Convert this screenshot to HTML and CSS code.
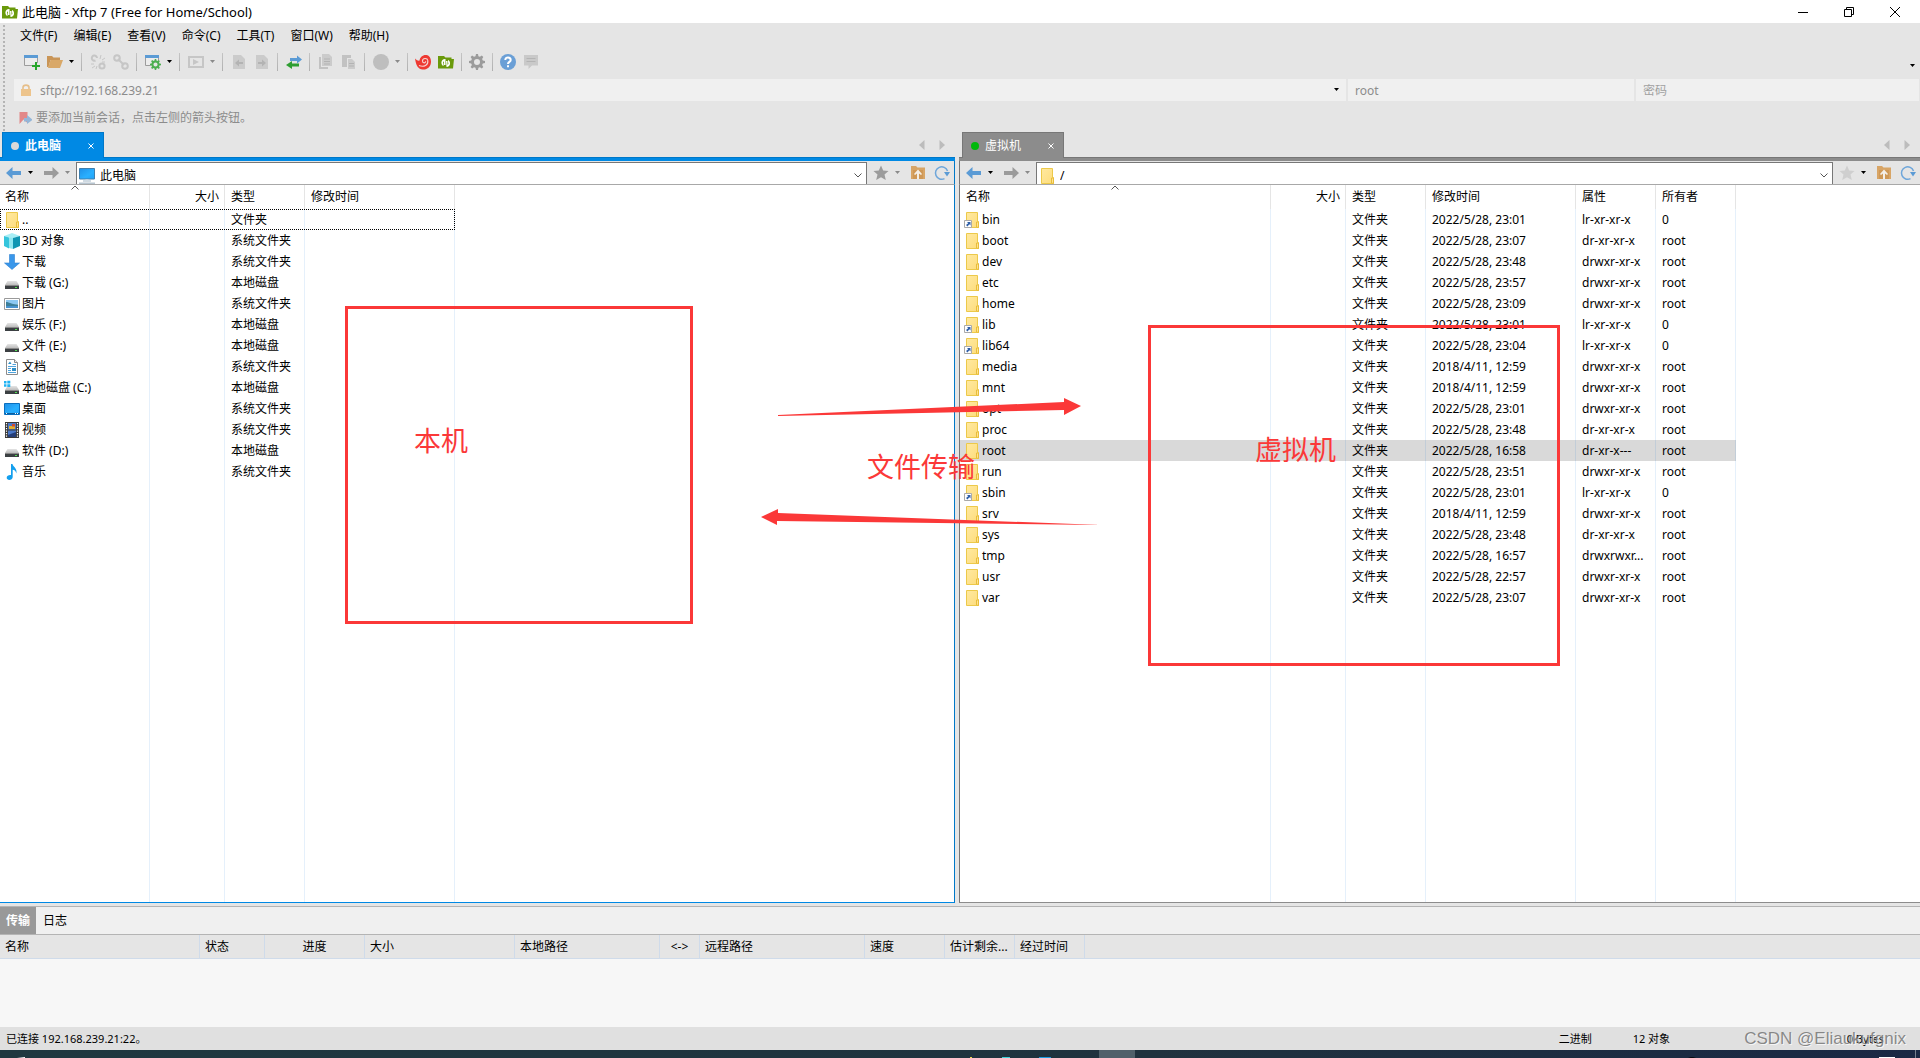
FILE: index.html
```html
<!DOCTYPE html>
<html lang="zh-CN">
<head>
<meta charset="utf-8">
<title>此电脑 - Xftp 7 (Free for Home/School)</title>
<link rel="stylesheet" href="styles.css">
</head>
<body>
<svg class="defs" aria-hidden="true">
  <defs>
    <linearGradient id="gFolder" x1="0" y1="0" x2="1" y2="1"><stop offset="0" stop-color="#ffe9a0"/><stop offset="1" stop-color="#fddc7c"/></linearGradient>
    <linearGradient id="gScreen" x1="0" y1="0" x2="1" y2="1"><stop offset="0" stop-color="#1e90e8"/><stop offset="0.6" stop-color="#29b0ff"/><stop offset="1" stop-color="#1fa2f8"/></linearGradient>
    <linearGradient id="gDisk" x1="0" y1="0" x2="0" y2="1"><stop offset="0" stop-color="#e4e4e4"/><stop offset="1" stop-color="#bdbdbd"/></linearGradient>
  </defs>
  <symbol id="folder" viewBox="0 0 16 16"><path d="M2.5.5h11v9h1v6h-12z" fill="url(#gFolder)" stroke="#ecc94a"/><path d="M12.5 15V10h2v5.500z" fill="#ffe391" stroke="#e8bd3a"/></symbol>
  <symbol id="folderlink" viewBox="0 0 16 16"><use href="#folder"/><path d="M.5 8.500h7v7h-7z" fill="#fff" stroke="#a9a9a9"/><path d="M3 10h3.500v3.500L5.300 12.300 3.500 14.500 2 13l2.200-1.800z" fill="#2f5fa8"/></symbol>
  <symbol id="cube" viewBox="0 0 16 16"><path d="M0 3 8 0l8 3-8 2.500z" fill="#a8eef5"/><path d="M0 3l5 1.500v11L0 13z" fill="#35c5dc"/><path d="M5 4.500 9 5v11l-4-1z" fill="#8fe6f0"/><path d="M9 5l7-2v10l-7 3z" fill="#0f95b2"/></symbol>
  <symbol id="down" viewBox="0 0 16 16"><path d="M5.500.5h5V9h5L8 15.500.5 9h5z" fill="#3a97ea" stroke="#2b7fd0" stroke-width=".6"/></symbol>
  <symbol id="disk" viewBox="0 0 16 16"><path d="M3.500 6h9L15 10H1z" fill="url(#gDisk)"/><path d="M1 10h14v4H1z" fill="#3c4043"/><path d="M1 10h14v1H1z" fill="#888"/><path d="M11 12h2v1h-2z" fill="#52e052"/></symbol>
  <symbol id="cdisk" viewBox="0 0 16 16"><use href="#disk"/><path d="M0 0h6v7H0z" fill="#fff"/><path d="M0 1h2.500v2.500H0zM3.300.7h3v2.800h-3zM0 4.300h2.500v2.500H0zM3.300 4.300h3V7h-3z" fill="#1fb2f2"/></symbol>
  <symbol id="picture" viewBox="0 0 16 16"><path d="M.5 2.500h15v11H.5z" fill="#fff" stroke="#9a9a9a"/><path d="M2 4h12v4.500H2z" fill="#8cc8f2"/><path d="M2 6c3 0 4 2 12 2.500V12H2z" fill="#3d7f9a"/><path d="M2 10h12v2H2z" fill="#4792cf"/></symbol>
  <symbol id="doc" viewBox="0 0 16 16"><path d="M2.500.5h8l3 3v12h-11z" fill="#fff" stroke="#8b8b8b"/><path d="M10.500.5v3h3" fill="#eee" stroke="#8b8b8b"/><path d="M4 7.500h8M4 9.500h3M4 11.500h3M4 13.500h8M8.500 5.500H12" stroke="#4fa3dd"/><path d="M4 5l2-2.500L7.500 5zM8 9h4v3H8z" fill="#2f8fc6"/></symbol>
  <symbol id="desktop" viewBox="0 0 16 16"><path d="M.5 2.500h15v11H.5z" fill="url(#gScreen)" stroke="#0a6fbe"/><path d="M1 12h14v1H1z" fill="#0c5e9e"/><path d="M2 12h1v1H2zM11 12h1v1h-1zM13 12h1v1h-1z" fill="#fff"/></symbol>
  <symbol id="video" viewBox="0 0 16 16"><path d="M1 0h14v16H1z" fill="#3a3a3a"/><path d="M4 1h8v6.500H4z" fill="#4a78c8"/><path d="M4 8.500h8V15H4z" fill="#4a78c8"/><path d="M5 4h6v3H5z" fill="#e0b030"/><path d="M8 2h3v2.500H8z" fill="#d04a30"/><path d="M4 13l8-3v5H4z" fill="#253e78"/><path d="M2.500 1v14M13.500 1v14" stroke="#fff" stroke-width="1.200" stroke-dasharray="1.300 1.200"/></symbol>
  <symbol id="music" viewBox="0 0 16 16"><path d="M7 0h1.500c.5 3 5 4 3.800 9.500C12 7 10.500 6 8.700 5.700V13c0 3.500-6 4-6 .8C2.700 11.500 5 10.700 7 11z" fill="#139fee"/></symbol>
  <symbol id="pc" viewBox="0 0 16 16"><path d="M.5.5h15v10.500H.5z" fill="url(#gScreen)" stroke="#3f7fae"/><path d="M4 12.500h8v1H4z" fill="#9fb4c4"/><path d="M6.500 11.500h3v1h-3z" fill="#cfdbe4"/><path d="M0 14.500h16v1.500H0z" fill="#b7c5d0"/></symbol>
  <symbol id="logo" viewBox="0 0 16 16"><path d="M0 2h6l1.500 1.500h6V5H16l-1 9.500H0z" fill="#6a9a0b"/><path d="M7 5C2.500 5 2.500 11 5.500 12v-2.200c-.8-1-.3-2.300.5-2.600V11h1.500V5zM8.500 13c4.500 0 4.500-6 1.500-7v2.200c.8 1 .3 2.300-.5 2.600V7H8z" fill="#fff"/></symbol>
  <symbol id="new" viewBox="0 0 16 16"><path d="M.5 1.500h13v10H.5z" fill="#ececec" stroke="#9c9c9c"/><path d="M0 1h14v3H0z" fill="#5b9bd5"/><path d="M8 9h8v6H8z" fill="#e5e5e5"/><path d="M12 8v8M8 12h8" stroke="#27a52b" stroke-width="2"/></symbol>
  <symbol id="open" viewBox="0 0 16 16"><path d="M0 2h5l1.500 1.500H13V6H3.500L1.500 13H0z" fill="#c99557"/><path d="M3.500 6H16l-3 8H1z" fill="#d9a868"/></symbol>
  <symbol id="link" viewBox="0 0 16 16"><g fill="none" stroke="#c6c6c6" stroke-width="2"><circle cx="4" cy="4" r="2.800"/><circle cx="12" cy="12" r="2.800"/><path d="m5 5 6 6"/></g></symbol>
  <symbol id="unlink" viewBox="0 0 16 16"><g fill="none" stroke="#c6c6c6" stroke-width="2"><path d="M5.500 6.500A2.600 2.600 0 1 1 7 4"/><circle cx="12" cy="12" r="2.600"/><path d="m10 5 1-4M12 6l3-2M12 8h3M1 10h3M2 14l3-2M6 15l1-3" stroke-width="1"/></g></symbol>
  <symbol id="gearshape" viewBox="0 0 16 16"><path fill-rule="evenodd" d="M7 0h2l.4 2.200 1.500.6L12.800 1.600l1.500 1.500-1.200 1.900.7 1.500L16 7v2l-2.200.5-.7 1.500 1.200 1.900-1.500 1.500-1.900-1.200-1.500.6L9 16H7l-.5-2.200-1.500-.6-1.900 1.200-1.500-1.500L2.900 11l-.7-1.500L0 9V7l2.200-.5.7-1.500-1.300-1.900 1.500-1.500L5 2.800l1.500-.6zM8 5a3 3 0 1 0 0 6 3 3 0 0 0 0-6z"/></symbol>
  <symbol id="wingear" viewBox="0 0 16 16"><path d="M.5 1.500h13v10H.5z" fill="#ececec" stroke="#9c9c9c"/><path d="M0 1h14v3H0z" fill="#5b9bd5"/><circle cx="10.500" cy="10.500" r="5" fill="#e5e5e5"/><use href="#gearshape" x="5" y="5" width="11" height="11" fill="#4caf50"/></symbol>
  <symbol id="gear" viewBox="0 0 16 16"><use href="#gearshape" x="0" y="0" width="16" height="16" fill="#9b9b9b"/></symbol>
  <symbol id="play" viewBox="0 0 16 16"><path d="M1 3h14v10H1z" fill="none" stroke="#c6c6c6" stroke-width="2"/><path d="M5 5l6 3-6 3z" fill="#c6c6c6"/></symbol>
  <symbol id="docleft" viewBox="0 0 16 16"><path d="M2 1h8l4 4v10H2z" fill="#cbcbcb"/><path d="M4 9l4-3.500V8h4v2H8v2.500z" fill="#b3b3b3"/></symbol>
  <symbol id="docright" viewBox="0 0 16 16"><path d="M2 1h8l4 4v10H2z" fill="#cbcbcb"/><path d="M12 9 8 5.500V8H4v2h4v2.500z" fill="#b3b3b3"/></symbol>
  <symbol id="swap" viewBox="0 0 16 16"><path d="M4 4h7V1.500L16 5.500l-5 4V7H4z" fill="#5b9bd5"/><path d="M13 9.500H6V7L0 11l6 4v-2.500h7z" fill="#2e9e32"/></symbol>
  <symbol id="copy" viewBox="0 0 16 16"><path d="M4 0h7l3 3v9H4z" fill="#cbcbcb"/><path d="M1 3h2v10h7v2H1z" fill="#c2c2c2"/><path d="M6 5h6M6 7.500h6M6 10h6" stroke="#b3b3b3"/></symbol>
  <symbol id="paste" viewBox="0 0 16 16"><path d="M1 1h9v3H6v9H1z" fill="#c2c2c2"/><path d="M7 5h4l3 3v7H7z" fill="#cbcbcb"/><path d="M8 9.500h5M8 12h5" stroke="#b3b3b3"/></symbol>
  <symbol id="globe" viewBox="0 0 16 16"><circle cx="8" cy="8" r="8" fill="#bebebe"/></symbol>
  <symbol id="swirl" viewBox="0 0 16 16"><path d="M0 4.500c2 2 3.500 2.500 4.500 2C5 3 8 .5 11.500 1c3 .5 4.500 3.500 4.500 6.500C16 13 12 16 7.500 15.500 3.500 15 1 12 0 4.500z" fill="#ee3a32"/><path d="M4 11.500c5 2 9.500-.5 8.800-5C12.300 3.500 7.500 4 7.500 7c0 2.500 3.300 2.300 3.100.2" fill="none" stroke="#f6d4d2" stroke-width="1.100"/></symbol>
  <symbol id="help" viewBox="0 0 16 16"><circle cx="8" cy="8" r="8" fill="#6a9fd6"/><path d="M5.300 6C5.300 2.500 10.700 2.700 10.700 6 10.700 8 8 7.800 8 10M8 11.300v2" fill="none" stroke="#fff" stroke-width="2"/></symbol>
  <symbol id="chat" viewBox="0 0 16 16"><path d="M1 1h14v10.500H9L5.500 15v-3.500H1z" fill="#c9c9c9"/><path d="M3.500 4.500h9M3.500 7.500h9" stroke="#b4b4b4"/></symbol>
  <symbol id="lock" viewBox="0 0 12 12"><path d="M3 6V3.500C3 .3 9 .3 9 3.500V6" fill="none" stroke="#e6bf8b" stroke-width="1.600"/><path d="M1 5h10v7H1z" fill="#edc48c"/></symbol>
  <symbol id="flag" viewBox="0 0 12 14"><path d="M0 1h8v11L4 8.500 0 13z" fill="#e28888"/><path d="M4.500 7h3V4L13 8.800 7.500 13v-2.500h-3z" fill="#94b6d8"/></symbol>
  <symbol id="back" viewBox="0 0 16 14"><path d="M0 7l6.500-6v4H15v4H6.500v4z"/></symbol>
  <symbol id="star" viewBox="0 0 16 16"><path d="m8 .5 2.200 5 5.300.4-4 3.600 1.300 5.500L8 12.200 3.200 15l1.300-5.500-4-3.600 5.300-.4z"/></symbol>
  <symbol id="up" viewBox="0 0 16 16"><path d="M1 1h5l1.500 1.500H15V14H1z" fill="#d8a566"/><path d="M3 5h10v9H3z" fill="#cf9856"/><path d="M8 4.500 12 9l-1 1-2-1.500V14H7V8.500L5 10 4 9z" fill="#f4eee6"/></symbol>
  <symbol id="refresh" viewBox="0 0 16 16"><path d="M10.500 13.600A6.200 6.200 0 1 1 13.500 6" fill="none" stroke="#6ea6da" stroke-width="1.500"/><path d="M10 7h6l-3 4.500z" fill="#5b9bd5"/></symbol>
  <symbol id="caret" viewBox="0 0 6 4"><path d="M0 0h5L2.500 3z"/></symbol>
  <symbol id="chev" viewBox="0 0 8 5"><path d="M.5.5 4 4 7.500.5" fill="none" stroke="#555"/></symbol>
  <symbol id="tri" viewBox="0 0 6 10"><path d="M5.500 0v10L0 5z" fill="#bcbcbc"/></symbol>
</svg>

<div class="app">
  <header class="titlebar">
    <svg class="i"><use href="#logo"/></svg>
    <h1 class="title">此电脑 - Xftp 7 (Free for Home/School)</h1>
    <button class="win" aria-label="最小化"><svg class="wi" viewBox="0 0 10 10"><path d="M0 5.500h10"/></svg></button>
    <button class="win" aria-label="还原"><svg class="wi" viewBox="0 0 10 10"><path d="M.5 2.500h7v7h-7zM2.500 2.500v-2h7v7h-2"/></svg></button>
    <button class="win" aria-label="关闭"><svg class="wi" viewBox="0 0 10 10"><path d="m0 0 10 10M10 0 0 10"/></svg></button>
  </header>

  <div class="bars">
    <nav class="menu">
      <button>文件(F)</button><button>编辑(E)</button><button>查看(V)</button><button>命令(C)</button><button>工具(T)</button><button>窗口(W)</button><button>帮助(H)</button>
    </nav>
    <div class="toolbar">
      <button class="tb" aria-label="新建"><svg class="i"><use href="#new"/></svg></button>
      <button class="tb" aria-label="打开"><svg class="i"><use href="#open"/></svg></button>
      <button class="cr" aria-label="打开列表"><svg class="c"><use href="#caret"/></svg></button>
      <span class="sep"></span>
      <button class="tb" aria-label="断开"><svg class="i"><use href="#unlink"/></svg></button>
      <button class="tb" aria-label="连接"><svg class="i"><use href="#link"/></svg></button>
      <span class="sep"></span>
      <button class="tb" aria-label="属性"><svg class="i"><use href="#wingear"/></svg></button>
      <button class="cr" aria-label="属性列表"><svg class="c"><use href="#caret"/></svg></button>
      <span class="sep"></span>
      <button class="tb" aria-label="执行"><svg class="i"><use href="#play"/></svg></button>
      <button class="cr dim" aria-label="执行列表"><svg class="c"><use href="#caret"/></svg></button>
      <span class="sep"></span>
      <button class="tb" aria-label="传到左侧"><svg class="i"><use href="#docleft"/></svg></button>
      <button class="tb" aria-label="传到右侧"><svg class="i"><use href="#docright"/></svg></button>
      <span class="sep"></span>
      <button class="tb" aria-label="同步"><svg class="i"><use href="#swap"/></svg></button>
      <span class="sep"></span>
      <button class="tb" aria-label="复制"><svg class="i"><use href="#copy"/></svg></button>
      <button class="tb" aria-label="粘贴"><svg class="i"><use href="#paste"/></svg></button>
      <span class="sep"></span>
      <button class="tb" aria-label="编码"><svg class="i"><use href="#globe"/></svg></button>
      <button class="cr dim" aria-label="编码列表"><svg class="c"><use href="#caret"/></svg></button>
      <span class="sep narrow"></span>
      <button class="tb" aria-label="Xshell"><svg class="i"><use href="#swirl"/></svg></button>
      <button class="tb" aria-label="Xftp"><svg class="i"><use href="#logo"/></svg></button>
      <span class="sep narrow"></span>
      <button class="tb" aria-label="选项"><svg class="i"><use href="#gear"/></svg></button>
      <span class="sep narrow"></span>
      <button class="tb" aria-label="帮助"><svg class="i"><use href="#help"/></svg></button>
      <button class="tb" aria-label="反馈"><svg class="i"><use href="#chat"/></svg></button>
      <button class="cr more" aria-label="工具栏选项"><svg class="c"><use href="#caret"/></svg></button>
    </div>
    <div class="address">
      <div class="field host"><svg class="lock"><use href="#lock"/></svg><input aria-label="主机" value="sftp://192.168.239.21"><button class="cr" aria-label="主机列表"><svg class="c"><use href="#caret"/></svg></button></div>
      <div class="field"><input aria-label="用户名" value="root"></div>
      <div class="field"><input aria-label="密码" placeholder="密码"></div>
    </div>
    <div class="hint"><svg class="flag"><use href="#flag"/></svg><span>要添加当前会话，点击左侧的箭头按钮。</span></div>
  </div>

  <main class="panes">
    <section class="pane local">
      <div class="tabs">
        <button class="tab"><span class="dot"></span><span class="name">此电脑</span><svg class="x" viewBox="0 0 6 6"><path d="m.5.5 5 5M5.500.5l-5 5"/></svg></button>
        <button class="scroll" aria-label="向左"><svg class="tri"><use href="#tri"/></svg></button>
        <button class="scroll next" aria-label="向右"><svg class="tri"><use href="#tri"/></svg></button>
      </div>
      <div class="nav">
        <button class="nb" aria-label="后退"><svg class="arr"><use href="#back"/></svg></button>
        <button class="nc" aria-label="后退列表"><svg class="c"><use href="#caret"/></svg></button>
        <button class="nb fwd" aria-label="前进"><svg class="arr"><use href="#back"/></svg></button>
        <button class="nc dim" aria-label="前进列表"><svg class="c"><use href="#caret"/></svg></button>
        <div class="path"><svg class="i"><use href="#pc"/></svg><input aria-label="本地路径" value="此电脑"><button class="pb" aria-label="路径列表"><svg class="chev"><use href="#chev"/></svg></button></div>
        <button class="nb star" aria-label="书签"><svg class="i"><use href="#star"/></svg></button>
        <button class="nc dim" aria-label="书签列表"><svg class="c"><use href="#caret"/></svg></button>
        <button class="nb" aria-label="上级目录"><svg class="i"><use href="#up"/></svg></button>
        <button class="nb" aria-label="刷新"><svg class="i"><use href="#refresh"/></svg></button>
      </div>
      <div class="list">
        <table>
          <colgroup><col class="c150"><col class="c75"><col class="c80"><col class="c150"></colgroup>
          <thead><tr><th class="sorted">名称<svg class="chev"><use href="#chev"/></svg></th><th class="r">大小</th><th>类型</th><th>修改时间</th></tr></thead>
          <tbody>
            <tr class="focus"><td class="n"><svg class="i"><use href="#folder"/></svg>..</td><td></td><td>文件夹</td><td></td></tr>
            <tr><td class="n"><svg class="i"><use href="#cube"/></svg>3D 对象</td><td></td><td>系统文件夹</td><td></td></tr>
            <tr><td class="n"><svg class="i"><use href="#down"/></svg>下载</td><td></td><td>系统文件夹</td><td></td></tr>
            <tr><td class="n"><svg class="i"><use href="#disk"/></svg>下载 (G:)</td><td></td><td>本地磁盘</td><td></td></tr>
            <tr><td class="n"><svg class="i"><use href="#picture"/></svg>图片</td><td></td><td>系统文件夹</td><td></td></tr>
            <tr><td class="n"><svg class="i"><use href="#disk"/></svg>娱乐 (F:)</td><td></td><td>本地磁盘</td><td></td></tr>
            <tr><td class="n"><svg class="i"><use href="#disk"/></svg>文件 (E:)</td><td></td><td>本地磁盘</td><td></td></tr>
            <tr><td class="n"><svg class="i"><use href="#doc"/></svg>文档</td><td></td><td>系统文件夹</td><td></td></tr>
            <tr><td class="n"><svg class="i"><use href="#cdisk"/></svg>本地磁盘 (C:)</td><td></td><td>本地磁盘</td><td></td></tr>
            <tr><td class="n"><svg class="i"><use href="#desktop"/></svg>桌面</td><td></td><td>系统文件夹</td><td></td></tr>
            <tr><td class="n"><svg class="i"><use href="#video"/></svg>视频</td><td></td><td>系统文件夹</td><td></td></tr>
            <tr><td class="n"><svg class="i"><use href="#disk"/></svg>软件 (D:)</td><td></td><td>本地磁盘</td><td></td></tr>
            <tr><td class="n"><svg class="i"><use href="#music"/></svg>音乐</td><td></td><td>系统文件夹</td><td></td></tr>
            <tr class="fill"><td></td><td></td><td></td><td></td></tr>
          </tbody>
        </table>
      </div>
    </section>

    <section class="pane remote">
      <div class="tabs">
        <button class="tab"><span class="dot"></span><span class="name">虚拟机</span><svg class="x" viewBox="0 0 6 6"><path d="m.5.5 5 5M5.500.5l-5 5"/></svg></button>
        <button class="scroll" aria-label="向左"><svg class="tri"><use href="#tri"/></svg></button>
        <button class="scroll next" aria-label="向右"><svg class="tri"><use href="#tri"/></svg></button>
      </div>
      <div class="nav">
        <button class="nb" aria-label="后退"><svg class="arr"><use href="#back"/></svg></button>
        <button class="nc" aria-label="后退列表"><svg class="c"><use href="#caret"/></svg></button>
        <button class="nb fwd" aria-label="前进"><svg class="arr"><use href="#back"/></svg></button>
        <button class="nc dim" aria-label="前进列表"><svg class="c"><use href="#caret"/></svg></button>
        <div class="path"><svg class="i"><use href="#folder"/></svg><input aria-label="远程路径" value="/"><button class="pb" aria-label="路径列表"><svg class="chev"><use href="#chev"/></svg></button></div>
        <button class="nb star pale" aria-label="书签"><svg class="i"><use href="#star"/></svg></button>
        <button class="nc" aria-label="书签列表"><svg class="c"><use href="#caret"/></svg></button>
        <button class="nb" aria-label="上级目录"><svg class="i"><use href="#up"/></svg></button>
        <button class="nb" aria-label="刷新"><svg class="i"><use href="#refresh"/></svg></button>
      </div>
      <div class="list">
        <table>
          <colgroup><col class="c311"><col class="c75"><col class="c80"><col class="c150"><col class="c80"><col class="c80"></colgroup>
          <thead><tr><th class="sorted">名称<svg class="chev"><use href="#chev"/></svg></th><th class="r">大小</th><th>类型</th><th>修改时间</th><th>属性</th><th>所有者</th></tr></thead>
          <tbody>
            <tr><td class="n"><svg class="i"><use href="#folderlink"/></svg>bin</td><td></td><td>文件夹</td><td>2022/5/28, 23:01</td><td>lr-xr-xr-x</td><td>0</td></tr>
            <tr><td class="n"><svg class="i"><use href="#folder"/></svg>boot</td><td></td><td>文件夹</td><td>2022/5/28, 23:07</td><td>dr-xr-xr-x</td><td>root</td></tr>
            <tr><td class="n"><svg class="i"><use href="#folder"/></svg>dev</td><td></td><td>文件夹</td><td>2022/5/28, 23:48</td><td>drwxr-xr-x</td><td>root</td></tr>
            <tr><td class="n"><svg class="i"><use href="#folder"/></svg>etc</td><td></td><td>文件夹</td><td>2022/5/28, 23:57</td><td>drwxr-xr-x</td><td>root</td></tr>
            <tr><td class="n"><svg class="i"><use href="#folder"/></svg>home</td><td></td><td>文件夹</td><td>2022/5/28, 23:09</td><td>drwxr-xr-x</td><td>root</td></tr>
            <tr><td class="n"><svg class="i"><use href="#folderlink"/></svg>lib</td><td></td><td>文件夹</td><td>2022/5/28, 23:01</td><td>lr-xr-xr-x</td><td>0</td></tr>
            <tr><td class="n"><svg class="i"><use href="#folderlink"/></svg>lib64</td><td></td><td>文件夹</td><td>2022/5/28, 23:04</td><td>lr-xr-xr-x</td><td>0</td></tr>
            <tr><td class="n"><svg class="i"><use href="#folder"/></svg>media</td><td></td><td>文件夹</td><td>2018/4/11, 12:59</td><td>drwxr-xr-x</td><td>root</td></tr>
            <tr><td class="n"><svg class="i"><use href="#folder"/></svg>mnt</td><td></td><td>文件夹</td><td>2018/4/11, 12:59</td><td>drwxr-xr-x</td><td>root</td></tr>
            <tr><td class="n"><svg class="i"><use href="#folder"/></svg>opt</td><td></td><td>文件夹</td><td>2022/5/28, 23:01</td><td>drwxr-xr-x</td><td>root</td></tr>
            <tr><td class="n"><svg class="i"><use href="#folder"/></svg>proc</td><td></td><td>文件夹</td><td>2022/5/28, 23:48</td><td>dr-xr-xr-x</td><td>root</td></tr>
            <tr class="selected"><td class="n"><svg class="i"><use href="#folder"/></svg>root</td><td></td><td>文件夹</td><td>2022/5/28, 16:58</td><td>dr-xr-x---</td><td>root</td></tr>
            <tr><td class="n"><svg class="i"><use href="#folder"/></svg>run</td><td></td><td>文件夹</td><td>2022/5/28, 23:51</td><td>drwxr-xr-x</td><td>root</td></tr>
            <tr><td class="n"><svg class="i"><use href="#folderlink"/></svg>sbin</td><td></td><td>文件夹</td><td>2022/5/28, 23:01</td><td>lr-xr-xr-x</td><td>0</td></tr>
            <tr><td class="n"><svg class="i"><use href="#folder"/></svg>srv</td><td></td><td>文件夹</td><td>2018/4/11, 12:59</td><td>drwxr-xr-x</td><td>root</td></tr>
            <tr><td class="n"><svg class="i"><use href="#folder"/></svg>sys</td><td></td><td>文件夹</td><td>2022/5/28, 23:48</td><td>dr-xr-xr-x</td><td>root</td></tr>
            <tr><td class="n"><svg class="i"><use href="#folder"/></svg>tmp</td><td></td><td>文件夹</td><td>2022/5/28, 16:57</td><td>drwxrwxr...</td><td>root</td></tr>
            <tr><td class="n"><svg class="i"><use href="#folder"/></svg>usr</td><td></td><td>文件夹</td><td>2022/5/28, 22:57</td><td>drwxr-xr-x</td><td>root</td></tr>
            <tr><td class="n"><svg class="i"><use href="#folder"/></svg>var</td><td></td><td>文件夹</td><td>2022/5/28, 23:07</td><td>drwxr-xr-x</td><td>root</td></tr>
            <tr class="fill"><td></td><td></td><td></td><td></td><td></td><td></td></tr>
          </tbody>
        </table>
      </div>
    </section>
  </main>

  <section class="transfer">
    <div class="ttabs"><button class="on">传输</button><button>日志</button></div>
    <div class="queue">
      <table>
        <colgroup><col class="c200"><col class="c65"><col class="c100"><col class="c150"><col class="c145"><col class="c40"><col class="c165"><col class="c80"><col class="c70"><col class="c70"></colgroup>
        <thead><tr><th>名称</th><th>状态</th><th class="m">进度</th><th>大小</th><th>本地路径</th><th class="m">&lt;-&gt;</th><th>远程路径</th><th>速度</th><th>估计剩余...</th><th>经过时间</th></tr></thead>
      </table>
    </div>
  </section>

  <footer class="status">
    <span class="msg">已连接 192.168.239.21:22。</span><span class="mode">二进制</span><span class="count">12 对象</span><span class="bytes">0 Bytes</span>
  </footer>

  <div class="taskbar">
    <span class="active"></span>
    <svg class="peek" viewBox="0 0 1920 8" preserveAspectRatio="xMinYMin slice"><path d="M17 8l8-1v1z" fill="#fff"/><path d="M970 7h2v1h-2z" fill="#e8d44a"/><path d="M1002 7h8v1h-8z" fill="#3fd0d8"/><path d="M1039 7h12v1h-12z" fill="#1b9be0"/><path d="M1688 8c2-1 6-1 8 0z" fill="#000"/><path d="M1879 7h16v1h-16z" fill="#fff"/><path d="M1915 0h1v8h-1z" fill="#76808f"/></svg>
  </div>

  <svg class="notes" aria-label="标注">
    <g fill="none" stroke="#fb3838" stroke-width="3"><path d="M346.500 307.500h345v315h-345zM1149.500 326.500h409v338h-409z"/></g>
    <g fill="#fb3838"><path d="M778 415 1064 402v-4l17 8-17 9v-5L778 416zM1101 525 778 513v-4l-17 8 16 8v-4z"/></g>
    <g class="notetext"><text x="414" y="451">本机</text><text x="867" y="477">文件传输</text><text x="1255" y="460">虚拟机</text></g>
  </svg>
  <div class="watermark">CSDN @Eliaukufgnix</div>
</div>
</body>
</html>
```
FILE: styles.css
```css
* { box-sizing: border-box; }

body {
  margin: 0;
  font: 12px/16px "Noto Sans", "Noto Sans CJK SC", sans-serif;
  color: #000;
  background: #e5e5e5;
}

button, input {
  font: inherit;
  color: inherit;
  background: none;
  border: 0;
  padding: 0;
  margin: 0;
  min-width: 0;
}

svg { display: block; flex: none; }
.defs { position: absolute; width: 0; height: 0; }
.i { width: 16px; height: 16px; }
.c { width: 6px; height: 4px; }
.chev { width: 8px; height: 5px; }

.app {
  position: relative;
  display: flex;
  flex-direction: column;
  height: 100vh;
  overflow: hidden;
}

/* title bar */
.titlebar { display: flex; align-items: center; height: 23px; background: #fff; padding: 0 2px; }
.title { flex: 1; margin: 0 0 0 4px; font-size: 13px; font-weight: 400; }
.win { width: 46px; height: 22px; display: grid; place-items: center; }
.wi { width: 10px; height: 10px; fill: none; stroke: #000; }

/* menu, toolbar, address */
.bars {
  height: 109px;
  padding-left: 12px;
  background: radial-gradient(circle, #b4b4b4 1px, transparent 1px) 2px 1px / 4px 4px repeat-y;
}
.menu { display: flex; height: 26px; }
.menu button { padding: 0 8px; white-space: nowrap; }
.toolbar { display: flex; align-items: center; height: 26px; padding-left: 8px; }
.tb { width: 23px; height: 22px; display: grid; place-items: center; }
.cr { width: 11px; height: 22px; display: grid; place-items: center; }
.dim { fill: #8a8a8a; }
.sep { width: 9px; height: 18px; background: linear-gradient(#c4c4c4, #b0b0b0) 4px 0 / 1px 100% no-repeat; }
.narrow { width: 8px; }
.more { margin-left: auto; margin-right: 2px; align-self: end; height: 18px; }
.address { display: grid; grid-template-columns: minmax(0, 1332fr) minmax(0, 286fr) minmax(0, 283fr); gap: 2px; padding: 4px 1px 0 2px; }
.field { display: flex; align-items: center; height: 22px; padding: 0 7px; background: #f0f0f0; color: #8c8c8c; }
.field.host { padding: 0 4px 0 6px; }
.field input { flex: 1; height: 22px; }
.field input::placeholder { color: #a0a0a0; opacity: 1; }
.lock { width: 12px; height: 12px; margin-right: 8px; }
.hint { display: flex; align-items: center; gap: 4px; height: 33px; padding-left: 7px; color: #8c8c8c; }
.flag { width: 13px; height: 14px; }

/* panes */
.panes { flex: 1; min-height: 0; display: flex; gap: 4px; }
.pane { flex: 961 1 0; min-width: 0; display: flex; flex-direction: column; --edge: #777; --tab: #8c8c8c; }
.local { flex-grow: 955; --edge: #0078c8; --tab: #0089e4; }
.tabs { display: flex; align-items: center; height: 29px; padding: 0 3px 4px 2px; background: linear-gradient(var(--edge) 1px, var(--tab) 1px) 0 25px / 100% 4px no-repeat; }
.remote .tabs { padding-left: 3px; }
.tab {
  display: flex;
  align-items: center;
  width: 102px;
  height: 26px;
  margin-bottom: -1px;
  margin-right: auto;
  padding: 0 9px 0 8px;
  color: #fff;
  background: var(--tab);
  border: 1px solid var(--edge);
  border-bottom: 0;
}
.dot { width: 8px; height: 8px; border-radius: 50%; background: #00b80c; margin-right: 6px; }
.local .dot { background: #d9d9d9; }
.local .name { font-weight: 700; }
.x { width: 6px; height: 6px; margin-left: auto; stroke: #fff; }
.scroll { width: 20px; height: 20px; display: grid; place-items: center; }
.tri { width: 6px; height: 10px; }
.next .tri { transform: scaleX(-1); }
.nav { display: flex; align-items: center; height: 24px; border-bottom: 1px solid #a8a8a8; padding: 0 0 0 2px; background: #e5e5e5; }
.local .nav { border-right: 1px solid var(--edge); }
.remote .nav { border-left: 1px solid var(--edge); }
.nb { width: 24px; height: 22px; display: grid; place-items: center; }
.nc { width: 13px; height: 22px; display: grid; place-items: center start; padding-left: 2px; }
.arr { width: 16px; height: 14px; fill: #5b9bd5; }
.fwd .arr { transform: scaleX(-1); fill: #9b9b9b; }
.star { fill: #9b9b9b; }
.pale { fill: #cfcfcf; }
.path { flex: 1; display: flex; align-items: center; gap: 4px; height: 22px; margin: 1px 2px 0 0; padding: 4px 3px 0 2px; border: 1px solid #777; border-bottom: 0; background: #fff; }
.path input { flex: 1; height: 16px; padding: 0 1px; }
.pb { width: 10px; height: 16px; display: grid; place-items: center; }
.list { flex: 1; min-height: 0; background: #fff; border-bottom: 1px solid var(--tab); }
.local .list { border-right: 1px solid var(--edge); }
.remote .list { border-left: 1px solid var(--edge); }

table { border-collapse: separate; border-spacing: 0; table-layout: fixed; width: 0; }
.list table { height: 100%; }
th { font-weight: 400; text-align: left; padding: 0 6px; white-space: nowrap; }
td { padding: 0 0 0 6px; height: 21px; white-space: nowrap; border-right: 1px solid rgba(0, 110, 220, .1); }
.list th { height: 24px; border-right: 1px solid #e5e5e5; }
th.r { text-align: right; padding-right: 5px; }
th.m { text-align: center; }
.local th:first-child, .queue th:first-child { padding-left: 5px; }
.sorted { position: relative; }
.sorted .chev { position: absolute; top: 0; left: calc(50% - 4px); transform: rotate(180deg); }
td.n { padding-left: 4px; }
.n .i { float: left; margin-right: 2px; }
.focus { outline: 1px dotted #000; outline-offset: -1px; }
.selected { background: #d9d9d9; }
.fill td { height: auto; }
.c40 { width: 40px; } .c65 { width: 65px; } .c70 { width: 70px; } .c75 { width: 75px; }
.c80 { width: 80px; } .c100 { width: 100px; } .c145 { width: 145px; } .c150 { width: 150px; }
.c165 { width: 165px; } .c200 { width: 200px; } .c311 { width: 311px; }

/* transfer queue */
.transfer { margin-top: 3px; border-top: 1px solid #b4b4b4; }
.ttabs { display: flex; height: 28px; background: #f0f0f0; border-bottom: 1px solid #b4b4b4; }
.ttabs button { padding: 0 7px; }
.ttabs .on { width: 36px; padding: 0 6px; background: #999; color: #fff; font-weight: 700; }
.queue { height: 92px; background: linear-gradient(#e5e5e5 23px, #cfdbea 23px, #cfdbea 24px, #f7f7f7 24px); }
.queue th { height: 23px; padding: 0 5px; border-right: 1px solid #cfdbea; }

.status { display: flex; align-items: center; height: 23px; padding: 0 36px 0 6px; background: #e0e0e0; font-size: 11px; }
.msg { flex: 1; }
.mode { width: 74px; }
.count { width: 214px; }

.taskbar { position: relative; height: 8px; background: linear-gradient(90deg, #203840, #20323e 60%, #1a2844); overflow: hidden; }
.peek { position: absolute; inset: 0; width: 100%; height: 8px; }
.active { position: absolute; left: 1099px; top: 0; width: 36px; height: 8px; background: #50606a; }

/* annotations drawn over the window */
.notes { position: absolute; inset: 0; width: 100%; height: 100%; pointer-events: none; }
.notetext { font-size: 27px; fill: #fb3838; }
.watermark { position: absolute; right: 14px; bottom: 7px; font: 17px/24px "Liberation Sans", sans-serif; color: rgba(110, 110, 110, .8); text-shadow: 1px 1px 0 rgba(255, 255, 255, .7); pointer-events: none; }
```
